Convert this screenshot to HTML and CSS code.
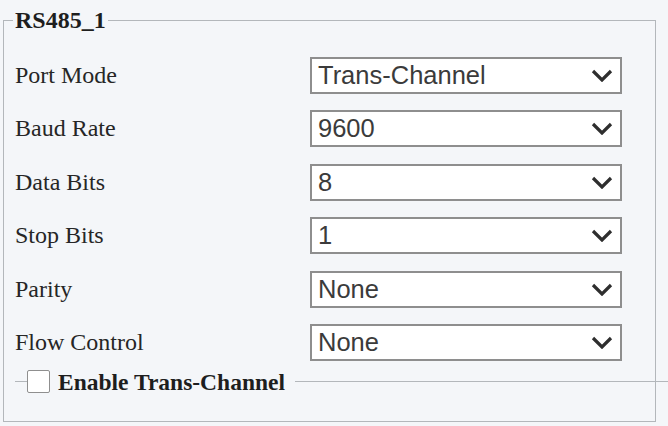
FILE: index.html
```
<html>
<head>
    <link rel="stylesheet" href="styles.css">
</head>
<body>
    <fieldset class="group">
        <legend class="group-title">RS485_1</legend>
        <div class="fields">
            <label class="field-label">Port Mode</label>
            <div class="select"><span>Trans-Channel</span><svg class="chevron" viewBox="0 0 22 13" width="22" height="13"><path d="M2 2 L11 11 L20 2" /></svg></div>
            <label class="field-label">Baud Rate</label>
            <div class="select"><span>9600</span><svg class="chevron" viewBox="0 0 22 13" width="22" height="13"><path d="M2 2 L11 11 L20 2" /></svg></div>
            <label class="field-label">Data Bits</label>
            <div class="select"><span>8</span><svg class="chevron" viewBox="0 0 22 13" width="22" height="13"><path d="M2 2 L11 11 L20 2" /></svg></div>
            <label class="field-label">Stop Bits</label>
            <div class="select"><span>1</span><svg class="chevron" viewBox="0 0 22 13" width="22" height="13"><path d="M2 2 L11 11 L20 2" /></svg></div>
            <label class="field-label">Parity</label>
            <div class="select"><span>None</span><svg class="chevron" viewBox="0 0 22 13" width="22" height="13"><path d="M2 2 L11 11 L20 2" /></svg></div>
            <label class="field-label">Flow Control</label>
            <div class="select"><span>None</span><svg class="chevron" viewBox="0 0 22 13" width="22" height="13"><path d="M2 2 L11 11 L20 2" /></svg></div>
        </div>
        <fieldset class="sub-group">
            <legend class="sub-title"><input type="checkbox" class="check"><span>Enable Trans-Channel</span></legend>
        </fieldset>
    </fieldset>
</body>
</html>
```

FILE: styles.css
```
html,
body {
    margin: 0px;
    width: 100%;
    height: 100%;
}

body {
    background: #f4f6f9;
    font-family: "Liberation Serif", "Times New Roman", serif;
    color: #222;
    overflow: hidden;
}

.group {
    margin: 8px 12px 0px 3px;
    padding: 25px 0px 27px 0px;
    border: 1px solid #b3b7bb;
    min-width: 0;
}

.group-title {
    margin-left: 9px;
    padding: 0px 2px;
    font-size: 24px;
    line-height: 24px;
    font-weight: bold;
    color: #1e1e1e;
}

.fields {
    display: grid;
    grid-template-columns: 295px 312px;
    row-gap: 16.4px;
    padding-left: 11px;
}

.field-label {
    font-size: 24px;
    line-height: 37px;
    color: #262626;
}

.select {
    box-sizing: border-box;
    height: 37px;
    border: 2px solid #8e8e8e;
    background: #fff;
    display: flex;
    align-items: center;
    justify-content: space-between;
    padding: 0px 7px 0px 6px;
    font-family: "Liberation Sans", Arial, sans-serif;
    font-size: 25.5px;
    color: #3b3b3b;
}

.chevron {
    fill: none;
    stroke: #2e2e2e;
    stroke-width: 3.2;
}

.sub-group {
    margin: 9px -40px 0px 11px;
    padding: 0px;
    border: none;
    border-top: 1px solid #b3b7bb;
    min-width: 0;
}

.sub-title {
    margin-left: 12px;
    padding: 0px 10px 0px 0px;
    display: flex;
    align-items: center;
    gap: 8px;
    font-size: 23.5px;
    line-height: 24px;
    font-weight: bold;
    color: #1e1e1e;
}

.check {
    appearance: none;
    margin: 0px;
    width: 23px;
    height: 23px;
    box-sizing: border-box;
    border: 1.5px solid #8f8f8f;
    border-radius: 2px;
    background: #fff;
}
```
